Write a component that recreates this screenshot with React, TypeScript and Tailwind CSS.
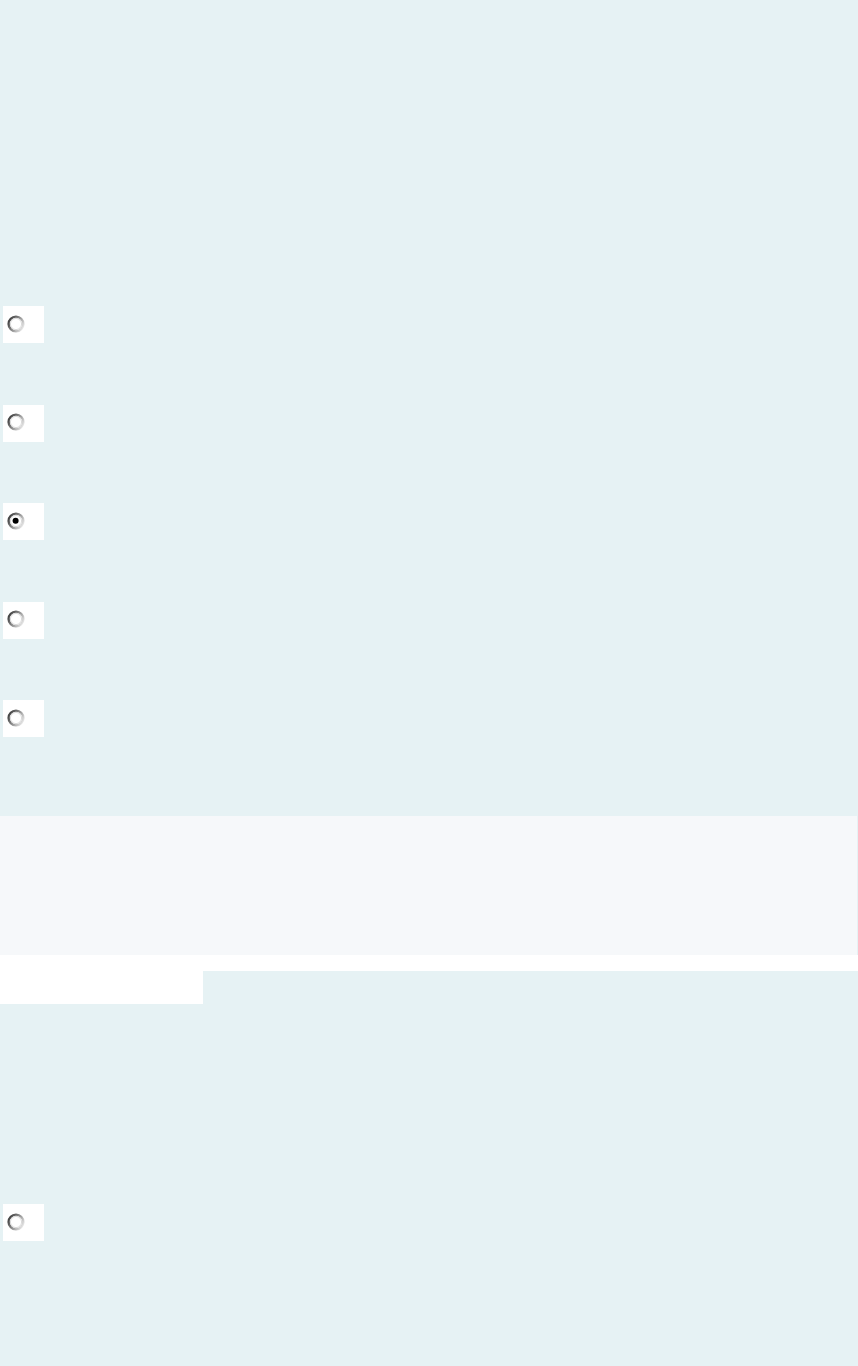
import React from "react";

function Radio({ checked = false }: { checked?: boolean }) {
  const id = checked ? "rgc" : "rgu";
  return (
    <div className="ml-[3px] flex h-[37px] w-[41px] shrink-0 items-center bg-white pl-[3px] pb-[2px]">
      <svg width="20" height="20" viewBox="0 0 20 20">
        <defs>
          <linearGradient id={id} x1="0" y1="0.2" x2="1" y2="0.8">
            <stop offset="0" stopColor="#3c3c3c" />
            <stop offset="0.5" stopColor="#909090" />
            <stop offset="1" stopColor="#ececec" />
          </linearGradient>
        </defs>
        <circle cx="10" cy="10" r="7.4" fill="#ffffff" stroke={`url(#${id})`} strokeWidth="2.4" />
        <circle cx="10" cy="10" r="5.6" fill="none" stroke="#dadada" strokeWidth="1" />
        {checked && <circle cx="9.6" cy="9.8" r="3" fill="#000000" />}
      </svg>
    </div>
  );
}

export default function App() {
  return (
    <div className="min-h-[1366px] w-[858px] bg-[#e6f2f4] font-['Liberation_Sans',sans-serif]">
      <div className="flex flex-col gap-[61.5px] pt-[306px] pb-[79px]">
        <Radio />
        <Radio />
        <Radio checked />
        <Radio />
        <Radio />
      </div>
      <div className="h-[139px] w-[857px] bg-[#f6f8fa]" />
      <div className="h-[16px] w-full bg-white" />
      <div className="flex h-[33px]">
        <div className="w-[203px] bg-white" />
        <div className="flex-1 bg-[#e6f2f4]" />
      </div>
      <div className="flex flex-col pt-[200px] pb-[125px]">
        <Radio />
      </div>
    </div>
  );
}
